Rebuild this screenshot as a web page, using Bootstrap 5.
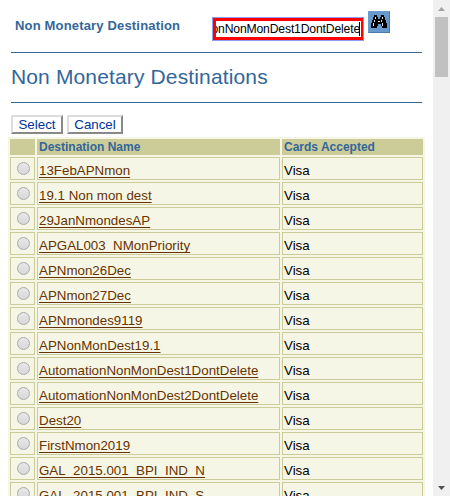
<!DOCTYPE html>
<html lang="en">
<head>
<meta charset="utf-8">
<meta name="viewport" content="width=device-width, initial-scale=1">
<title>Non Monetary Destinations</title>
<link href="https://cdn.jsdelivr.net/npm/bootstrap@5.3.0/dist/css/bootstrap.min.css" rel="stylesheet">
<style>
  body { font-family: "Liberation Sans", Arial, sans-serif; font-size: 13.33px; line-height: 16px; color: #000; }
  .viewport { height: 496px; }
  .page { width: 433px; }
  .search-bar { height: 52px; padding: 11px 0 0 15px; }
  .search-label { width: 197px; padding-top: 7px; font-size: 13px; color: #369; letter-spacing: .17px; }
  .lookup-field { width: 150px; height: 22px; margin: 7px 1px 0; border: solid #f00; border-width: 3px 2px 3px 3px; outline: 1px solid #8c9cf0; font-size: 12.2px; line-height: 16px; letter-spacing: -.17px; }
  .lookup-text { margin-right: -1px; }
  .caret { width: 1px; height: 14px; margin-right: 1px; background: #000; }
  .find-btn { width: 22px; height: 22px; margin-left: 4px; background: #6699cc; border: 1px solid; border-color: #6b9ed0 #4d78aa #4d78aa #6b9ed0; }
  .rule { height: 1px; margin: 0 11px; background: #369; }
  .page-title { height: 49px; padding: 12px 0 0 11px; margin: 0; font-size: 21px; line-height: 24px; font-weight: 400; letter-spacing: .14px; color: #369; }
  .actions { height: 34px; padding: 12px 0 0 11px; gap: 4px; }
  .action-btn { height: 19px; border: 2px solid; border-color: #ddd #888 #888 #ddd; background: #fff; color: #039; padding: 0; line-height: 15px; font-size: 13.33px; }
  .select { width: 52px; }
  .cancel { width: 56px; }
  .results { width: 417px; margin-left: 8px; table-layout: fixed; border-collapse: separate; border-spacing: 2px; background: #f6f6e6; }
  .results th { height: 16px; padding: 0 2px; background: #cc9; color: #369; font-size: 12px; line-height: 16px; }
  .results td { height: 23px; border: 1px solid #cc9; padding: 4px 1px 0; line-height: 17px; vertical-align: top; }
  .results td.pick { padding: 4px 0 0 6px; }
  .results a { color: #630; text-decoration: underline; text-underline-offset: 2px; text-decoration-thickness: 1px; text-decoration-skip-ink: none; }
  .radio { display: block; width: 13px; height: 13px; border: 1px solid #aaa; border-radius: 50%; background: linear-gradient(#e8e8e8, #d8d8d8); }
  .scroll-track { width: 17px; background: #f0f0f0; }
  .scroll-thumb { width: 13px; height: 60px; background: #c1c1c1; }
  .arrow-box { height: 17px; }
</style>
<script src="https://cdn.jsdelivr.net/npm/bootstrap@5.3.0/dist/js/bootstrap.bundle.min.js"></script>
</head>
<body class="bg-white overflow-hidden">
<div class="viewport d-flex overflow-hidden">
  <main class="page flex-shrink-0 overflow-hidden">
    <div class="search-bar d-flex align-items-start">
      <label class="search-label fw-bold text-nowrap flex-shrink-0">Non Monetary Destination</label>
      <div class="lookup-field d-flex flex-shrink-0 align-items-center">
        <div class="lookup-text d-flex justify-content-end overflow-hidden text-nowrap flex-fill"><span>onNonMonDest1DontDelete</span></div>
        <span class="caret flex-shrink-0"></span>
      </div>
      <div class="find-btn d-flex flex-shrink-0 align-items-center justify-content-center">
        <svg width="16" height="14" viewBox="0 0 16 14" shape-rendering="crispEdges"><path d="M3 0h3v2h1v2h2V2h1V0h3v2h1v3h1v3h1v5h-5v-2h-1V9H7v2H6v2H0V8h1V5h1V2h1z" fill="#000"/><path d="M4 2h1v2H4zM3 5h1v2H3zM2 8h1v3H2zM11 2h1v2h-1zM10 5h1v2h-1zM11 8h1v3h-1zM7 6h2v1H7z" fill="#d8e4ee"/></svg>
      </div>
    </div>
    <div class="rule"></div>
    <h1 class="page-title">Non Monetary Destinations</h1>
    <div class="rule"></div>
    <div class="actions d-flex">
      <button class="action-btn select">Select</button>
      <button class="action-btn cancel">Cancel</button>
    </div>
    <table class="results">
      <colgroup><col style="width:25px"><col style="width:243px"><col style="width:141px"></colgroup>
      <thead><tr><th></th><th>Destination Name</th><th>Cards Accepted</th></tr></thead>
      <tbody>
        <tr><td class="pick"><span class="radio"></span></td><td><a href="#">13FebAPNmon</a></td><td>Visa</td></tr>
        <tr><td class="pick"><span class="radio"></span></td><td><a href="#">19.1 Non mon dest</a></td><td>Visa</td></tr>
        <tr><td class="pick"><span class="radio"></span></td><td><a href="#">29JanNmondesAP</a></td><td>Visa</td></tr>
        <tr><td class="pick"><span class="radio"></span></td><td><a href="#">APGAL003_NMonPriority</a></td><td>Visa</td></tr>
        <tr><td class="pick"><span class="radio"></span></td><td><a href="#">APNmon26Dec</a></td><td>Visa</td></tr>
        <tr><td class="pick"><span class="radio"></span></td><td><a href="#">APNmon27Dec</a></td><td>Visa</td></tr>
        <tr><td class="pick"><span class="radio"></span></td><td><a href="#">APNmondes9119</a></td><td>Visa</td></tr>
        <tr><td class="pick"><span class="radio"></span></td><td><a href="#">APNonMonDest19.1</a></td><td>Visa</td></tr>
        <tr><td class="pick"><span class="radio"></span></td><td><a href="#">AutomationNonMonDest1DontDelete</a></td><td>Visa</td></tr>
        <tr><td class="pick"><span class="radio"></span></td><td><a href="#">AutomationNonMonDest2DontDelete</a></td><td>Visa</td></tr>
        <tr><td class="pick"><span class="radio"></span></td><td><a href="#">Dest20</a></td><td>Visa</td></tr>
        <tr><td class="pick"><span class="radio"></span></td><td><a href="#">FirstNmon2019</a></td><td>Visa</td></tr>
        <tr><td class="pick"><span class="radio"></span></td><td><a href="#">GAL_2015.001_BPI_IND_N</a></td><td>Visa</td></tr>
        <tr><td class="pick"><span class="radio"></span></td><td><a href="#">GAL_2015.001_BPI_IND_S</a></td><td>Visa</td></tr>
      </tbody>
    </table>
  </main>
  <div class="scroll-track d-flex flex-column align-items-center flex-shrink-0">
    <div class="arrow-box d-flex align-items-center"><svg width="7" height="4" viewBox="0 0 7 4"><path d="M0 4L3.5 0 7 4z" fill="#a3a3a3"/></svg></div>
    <div class="scroll-thumb"></div>
    <div class="arrow-box d-flex align-items-center mt-auto"><svg width="7" height="4" viewBox="0 0 7 4"><path d="M0 0L3.5 4 7 0z" fill="#505050"/></svg></div>
  </div>
</div>
</body>
</html>
